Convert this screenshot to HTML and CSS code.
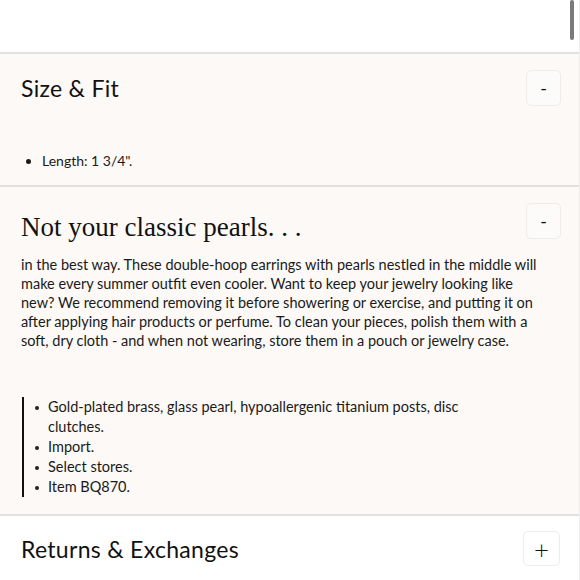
FILE: index.html
```html
<!DOCTYPE html>
<html>
<head>
<meta charset="utf-8">
<link rel="stylesheet" href="styles.css">
</head>
<body>
<div class="page">
  <div class="top"></div>
  <section class="panel open">
    <div class="panel-head">
      <h2 class="title">Size &amp; Fit</h2>
      <button class="toggle">-</button>
    </div>
    <ul class="fit-list">
      <li>Length: 1 3/4".</li>
    </ul>
  </section>
  <section class="panel open">
    <div class="panel-head">
      <h2 class="title serif">Not your classic pearls. . .</h2>
      <button class="toggle">-</button>
    </div>
    <p class="desc">in the best way. These double-hoop earrings with pearls nestled in the middle will make every summer outfit even cooler. Want to keep your jewelry looking like<br>new? We recommend removing it before showering or exercise, and putting it on after applying hair products or perfume. To clean your pieces, polish them with a soft, dry cloth - and when not wearing, store them in a pouch or jewelry case.</p>
    <ul class="details">
      <li>Gold-plated brass, glass pearl, hypoallergenic titanium posts, disc clutches.</li>
      <li>Import.</li>
      <li>Select stores.</li>
      <li>Item BQ870.</li>
    </ul>
  </section>
  <section class="panel closed">
    <div class="panel-head">
      <h2 class="title">Returns &amp; Exchanges</h2>
      <button class="toggle plus">+</button>
    </div>
  </section>
  <div class="scrollbar"></div>
</div>
</body>
</html>
```

FILE: styles.css
```css
html, body {
  margin: 0;
  padding: 0;
  background: #ffffff;
}
body {
  font-family: Lato, "Open Sans", sans-serif;
  color: #1a1a1a;
}
.page {
  position: relative;
  width: 580px;
  height: 580px;
  overflow: hidden;
  border-right: 1px solid #ececec;
  box-sizing: border-box;
}
.top {
  height: 52px;
}
.panel {
  border-top: 2px solid #e3e1e0;
}
.panel.open {
  background: #fcf9f7;
}
.panel.closed {
  background: #ffffff;
  padding-top: 15px;
}
.panel-head {
  display: flex;
  justify-content: space-between;
  align-items: center;
  padding: 16px 18px 0 21px;
}
.panel.closed .panel-head {
  padding-top: 0;
  padding-right: 19px;
}
.title {
  margin: 0;
  font-weight: 400;
  font-size: 23px;
  letter-spacing: 0.3px;
  color: #111;
}
.title.serif {
  font-family: "Liberation Serif", "Times New Roman", serif;
  font-size: 27px;
  letter-spacing: 0;
  padding-top: 9px;
}
.toggle {
  width: 35px;
  height: 36px;
  border: 1px solid #efecea;
  border-radius: 5px;
  background: #fdfbfa;
  font-family: Lato, sans-serif;
  font-size: 18px;
  color: #111;
  padding: 0;
  display: flex;
  align-items: center;
  justify-content: center;
}
.panel.open .panel-head .toggle {
  align-self: flex-start;
}
.toggle.plus {
  background: #ffffff;
  font-size: 26px;
  font-weight: 300;
  height: 35px;
  width: 37px;
}
.fit-list {
  margin: 45px 0 0 0;
  padding: 0 0 14px 42px;
  font-size: 14px;
  line-height: 20px;
}
.desc {
  margin: 12px 38px 0 21px;
  font-size: 14.5px;
  line-height: 19px;
}
.details {
  margin: 47px 0 0 22px;
  padding: 0 0 17px 0;
  list-style: none;
  font-size: 14.5px;
  line-height: 20px;
}
.details li {
  position: relative;
  padding-left: 24px;
  max-width: 430px;
  border-left: 2px solid #111;
}
.details li::before {
  content: "";
  position: absolute;
  left: 11px;
  top: 9px;
  width: 4px;
  height: 4px;
  border-radius: 50%;
  background: #222;
}
.scrollbar {
  position: absolute;
  top: 0;
  left: 570px;
  width: 4px;
  height: 40px;
  border-radius: 2px;
  background: #7a7a7a;
}
```
